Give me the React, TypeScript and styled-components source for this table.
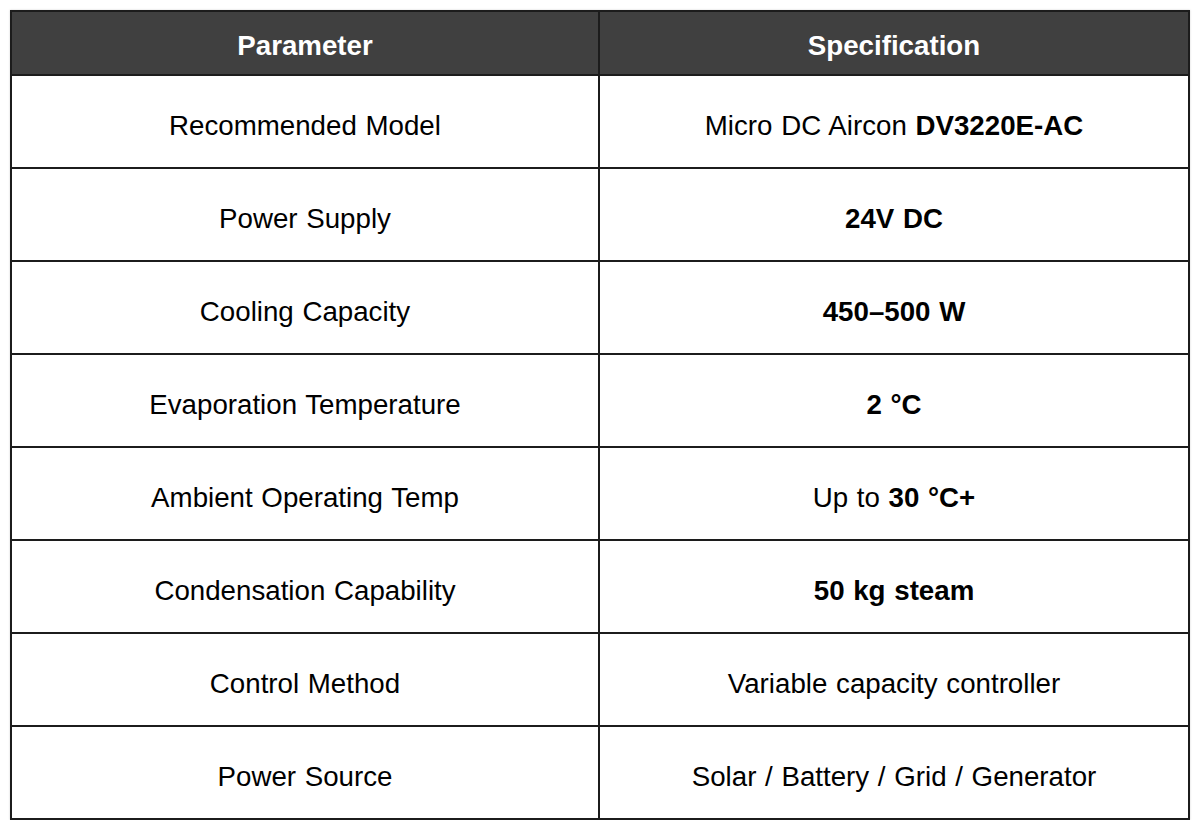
import React from "react";
import styled, { createGlobalStyle } from "styled-components";

const GlobalStyle = createGlobalStyle`
  html, body {
    margin: 0;
    padding: 0;
    background: #ffffff;
  }
  body {
    font-family: "Liberation Sans", Arial, sans-serif;
    color: #000;
  }
`;

const Page = styled.div`
  padding: 10px 0 0 10px;
`;

const Table = styled.div`
  box-sizing: border-box;
  width: 1180px;
  border: 2px solid #1c1c1c;
  box-shadow: 0 0 2px rgba(0, 0, 0, 0.18);
  display: grid;
  grid-template-columns: 1fr 1fr;
`;

const Cell = styled.div<{ $head?: boolean; $left?: boolean; $last?: boolean }>`
  box-sizing: border-box;
  height: ${(p) => (p.$head ? 64 : p.$last ? 91 : 93)}px;
  display: flex;
  align-items: center;
  justify-content: center;
  font-size: 27.7px;
  word-spacing: 1px;
  font-weight: ${(p) => (p.$head ? 700 : 400)};
  color: ${(p) => (p.$head ? "#ffffff" : "#000000")};
  background: ${(p) => (p.$head ? "#404040" : "#ffffff")};
  border-right: ${(p) => (p.$left ? "2px solid #1c1c1c" : "none")};
  border-bottom: ${(p) => (p.$last ? "none" : "2px solid #1c1c1c")};
  padding-top: ${(p) => (p.$head ? 5 : p.$last ? 8 : 8)}px;
  white-space: nowrap;
`;

const Strong = styled.b`
  font-weight: 700;
`;

type Row = { param: string; spec: React.ReactNode };

const rows: Row[] = [
  {
    param: "Recommended Model",
    spec: (
      <>
        Micro DC Aircon&nbsp;<Strong>DV3220E-AC</Strong>
      </>
    ),
  },
  { param: "Power Supply", spec: <Strong>24V DC</Strong> },
  { param: "Cooling Capacity", spec: <Strong>450–500 W</Strong> },
  { param: "Evaporation Temperature", spec: <Strong>2 °C</Strong> },
  {
    param: "Ambient Operating Temp",
    spec: (
      <>
        Up to&nbsp;<Strong>30 °C+</Strong>
      </>
    ),
  },
  { param: "Condensation Capability", spec: <Strong>50 kg steam</Strong> },
  { param: "Control Method", spec: "Variable capacity controller" },
  { param: "Power Source", spec: "Solar / Battery / Grid / Generator" },
];

export default function App() {
  return (
    <>
      <GlobalStyle />
      <Page>
        <Table>
          <Cell $head $left>
            Parameter
          </Cell>
          <Cell $head>Specification</Cell>
          {rows.map((r, i) => {
            const last = i === rows.length - 1;
            return (
              <React.Fragment key={r.param}>
                <Cell $left $last={last}>
                  {r.param}
                </Cell>
                <Cell $last={last}>{r.spec}</Cell>
              </React.Fragment>
            );
          })}
        </Table>
      </Page>
    </>
  );
}
